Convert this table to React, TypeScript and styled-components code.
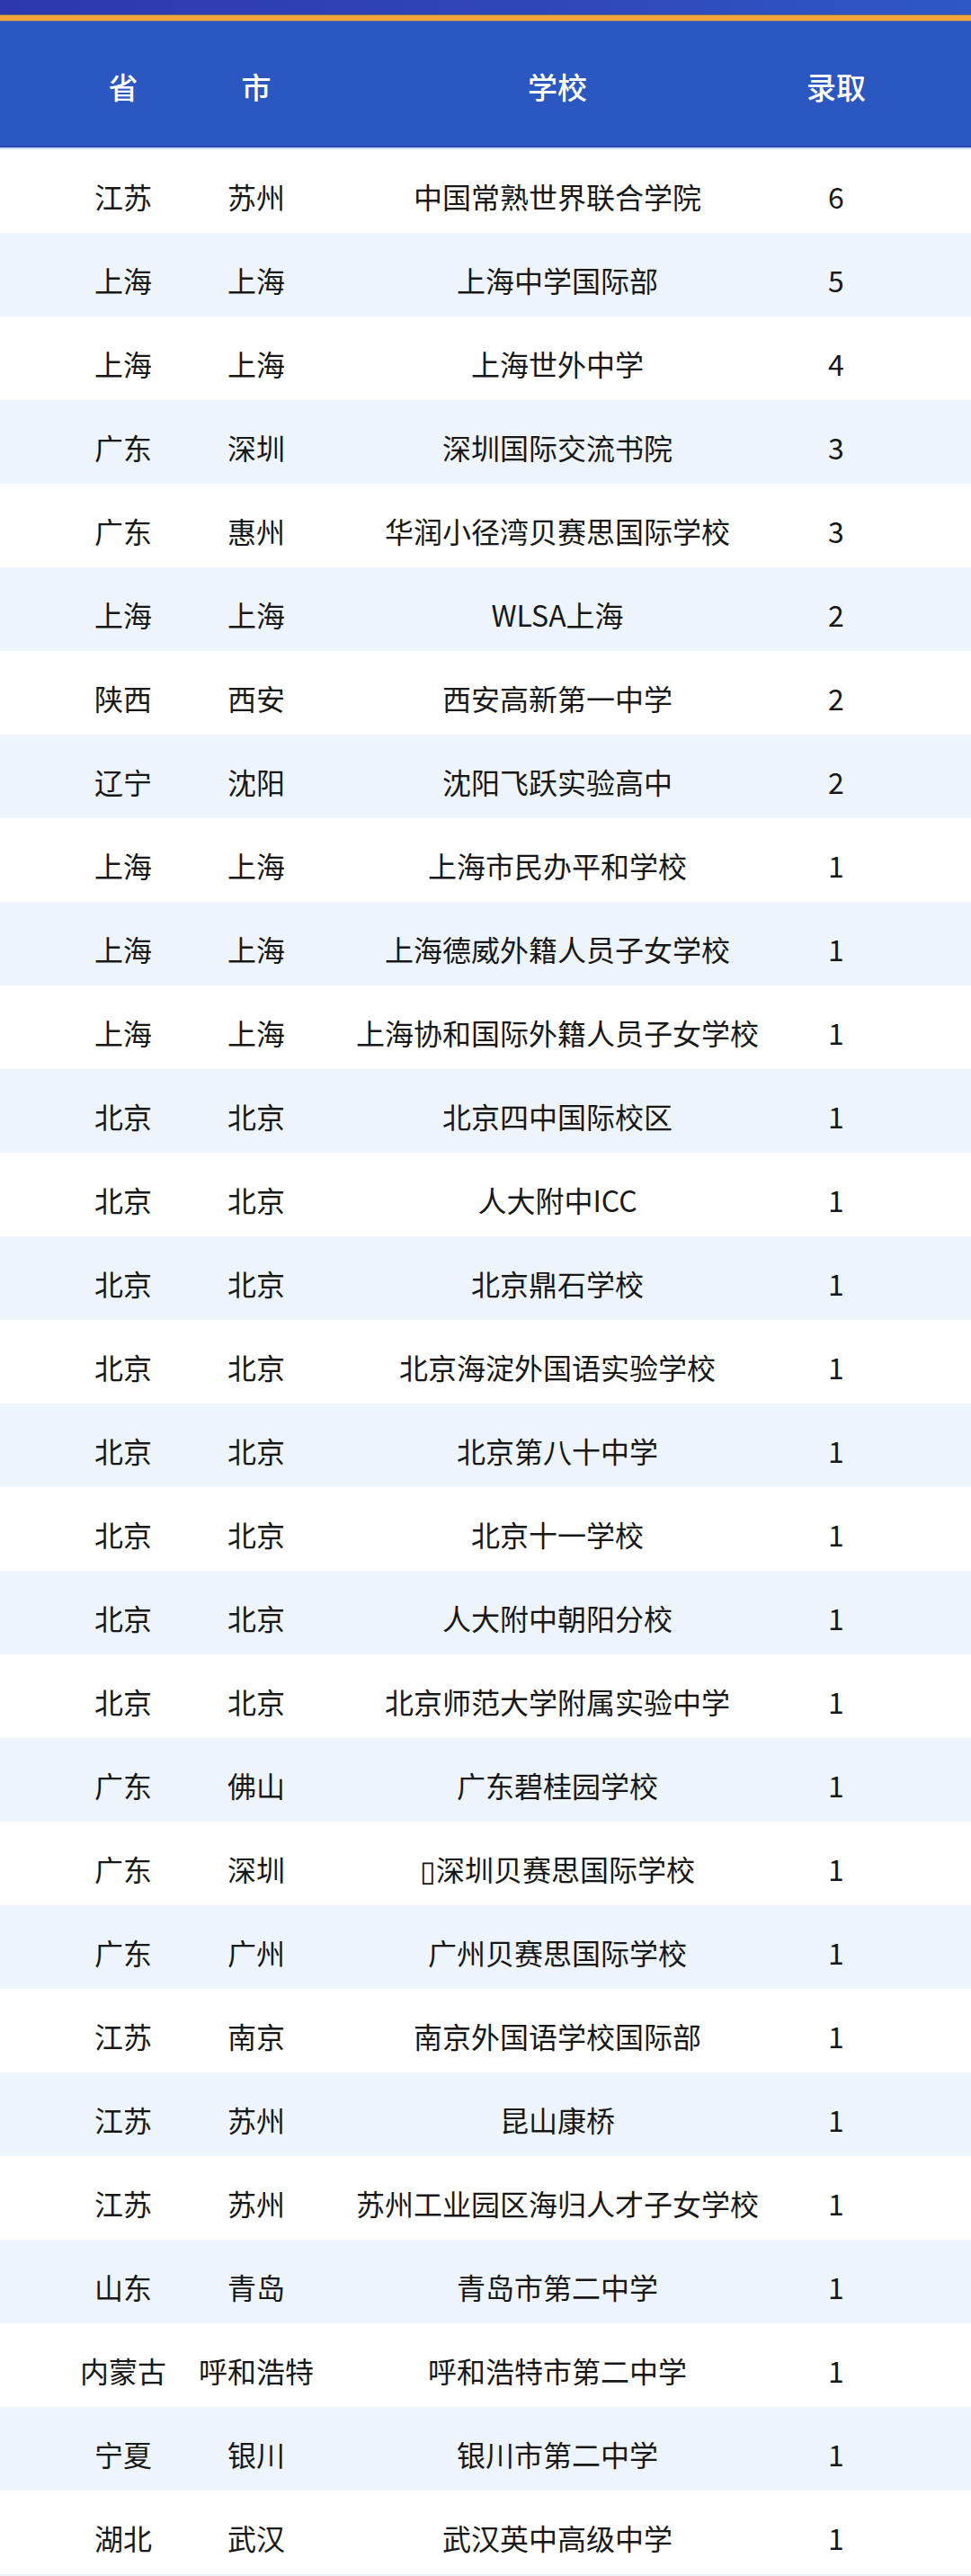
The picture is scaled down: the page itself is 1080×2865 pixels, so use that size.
import React from "react";
import styled, { createGlobalStyle } from "styled-components";

type Row = [string, string, string, number];

const rows: Row[] = [
  ["江苏", "苏州", "中国常熟世界联合学院", 6],
  ["上海", "上海", "上海中学国际部", 5],
  ["上海", "上海", "上海世外中学", 4],
  ["广东", "深圳", "深圳国际交流书院", 3],
  ["广东", "惠州", "华润小径湾贝赛思国际学校", 3],
  ["上海", "上海", "WLSA上海", 2],
  ["陕西", "西安", "西安高新第一中学", 2],
  ["辽宁", "沈阳", "沈阳飞跃实验高中", 2],
  ["上海", "上海", "上海市民办平和学校", 1],
  ["上海", "上海", "上海德威外籍人员子女学校", 1],
  ["上海", "上海", "上海协和国际外籍人员子女学校", 1],
  ["北京", "北京", "北京四中国际校区", 1],
  ["北京", "北京", "人大附中ICC", 1],
  ["北京", "北京", "北京鼎石学校", 1],
  ["北京", "北京", "北京海淀外国语实验学校", 1],
  ["北京", "北京", "北京第八十中学", 1],
  ["北京", "北京", "北京十一学校", 1],
  ["北京", "北京", "人大附中朝阳分校", 1],
  ["北京", "北京", "北京师范大学附属实验中学", 1],
  ["广东", "佛山", "广东碧桂园学校", 1],
  ["广东", "深圳", "▯深圳贝赛思国际学校", 1],
  ["广东", "广州", "广州贝赛思国际学校", 1],
  ["江苏", "南京", "南京外国语学校国际部", 1],
  ["江苏", "苏州", "昆山康桥", 1],
  ["江苏", "苏州", "苏州工业园区海归人才子女学校", 1],
  ["山东", "青岛", "青岛市第二中学", 1],
  ["内蒙古", "呼和浩特", "呼和浩特市第二中学", 1],
  ["宁夏", "银川", "银川市第二中学", 1],
  ["湖北", "武汉", "武汉英中高级中学", 1],
];

const GlobalStyle = createGlobalStyle`
  html, body {
    margin: 0;
    padding: 0;
    background: #ffffff;
  }
  body {
    font-family: "Noto Sans CJK SC", "Noto Sans", sans-serif;
  }
`;

const Page = styled.div`
  width: 1080px;
  display: flex;
  flex-direction: column;
  background: #e7f2fa;
  padding-bottom: 4px;
`;

const TopBand = styled.div`
  height: 16px;
  background: linear-gradient(90deg, #2d38ae 0%, #3046b8 55%, #2e58c6 100%);
`;

const Stripe = styled.div`
  height: 8px;
  background: #f3a53a;
  border-top: 1px solid #6d6a6e;
  border-bottom: 1px solid #5c6891;
  box-sizing: border-box;
`;

const Grid = styled.div`
  display: grid;
  grid-template-columns: 150px 146px 524px 96px;
  padding: 0 102px 0 62px;
  align-items: center;
`;

const Header = styled(Grid)`
  height: 138px;
  background: #2a57c0;
  border-bottom: 2px solid #2548a8;
  box-shadow: 0 2px 0 #c9dcf4;
  margin-bottom: 2px;
`;

const HeadCell = styled.div`
  text-align: center;
  color: #ffffff;
  font-size: 33px;
  font-weight: 500;
  padding-top: 6px;
`;

const BodyRow = styled(Grid)<{ $shade: boolean }>`
  height: 93px;
  background: ${(p) => (p.$shade ? "#eef4fc" : "#ffffff")};
`;

const Cell = styled.div`
  text-align: center;
  color: #181818;
  font-size: 32px;
  font-weight: 400;
  white-space: nowrap;
  padding-top: 10px;
`;

export default function App() {
  return (
    <>
      <GlobalStyle />
      <Page>
        <TopBand />
        <Stripe />
        <Header>
          <HeadCell>省</HeadCell>
          <HeadCell>市</HeadCell>
          <HeadCell>学校</HeadCell>
          <HeadCell>录取</HeadCell>
        </Header>
        {rows.map(([prov, city, school, count], i) => (
          <BodyRow key={i} $shade={i % 2 === 1}>
            <Cell>{prov}</Cell>
            <Cell>{city}</Cell>
            <Cell>{school}</Cell>
            <Cell>{count}</Cell>
          </BodyRow>
        ))}
      </Page>
    </>
  );
}
